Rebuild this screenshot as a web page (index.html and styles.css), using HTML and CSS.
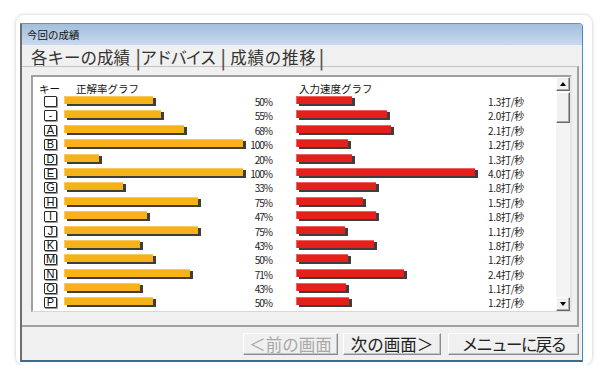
FILE: index.html
```html
<!DOCTYPE html>
<html lang="ja">
<head>
<meta charset="utf-8">
<title>今回の成績</title>
<link rel="stylesheet" href="styles.css">
</head>
<body>
<div class="card">
  <div class="window">
    <div class="titlebar">今回の成績</div>
    <div class="tabs">
      <span class="tab t1">各キーの成績</span><span class="sep s1">|</span><span class="tab t2">アドバイス</span><span class="sep s2">|</span><span class="tab t3">成績の推移</span><span class="sep s3">|</span>
    </div>
    <div class="panel">
      <div class="listbox">
        <div class="content">
          <div class="head"><span class="h-key">キー</span><span class="h-acc">正解率グラフ</span><span class="h-spd">入力速度グラフ</span></div>
          <div class="row"><span class="key"></span><span class="acc-area"><i class="bar acc" style="width:89px"></i></span><span class="pct">50%</span><span class="spd-area"><i class="bar spd" style="width:56px"></i></span><span class="rate">1.3打/秒</span></div>
          <div class="row"><span class="key">-</span><span class="acc-area"><i class="bar acc" style="width:97px"></i></span><span class="pct">55%</span><span class="spd-area"><i class="bar spd" style="width:91px"></i></span><span class="rate">2.0打/秒</span></div>
          <div class="row"><span class="key">A</span><span class="acc-area"><i class="bar acc" style="width:120px"></i></span><span class="pct">68%</span><span class="spd-area"><i class="bar spd" style="width:95px"></i></span><span class="rate">2.1打/秒</span></div>
          <div class="row"><span class="key">B</span><span class="acc-area"><i class="bar acc" style="width:179px"></i></span><span class="pct">100%</span><span class="spd-area"><i class="bar spd" style="width:52px"></i></span><span class="rate">1.2打/秒</span></div>
          <div class="row"><span class="key">D</span><span class="acc-area"><i class="bar acc" style="width:35px"></i></span><span class="pct">20%</span><span class="spd-area"><i class="bar spd" style="width:56px"></i></span><span class="rate">1.3打/秒</span></div>
          <div class="row"><span class="key">E</span><span class="acc-area"><i class="bar acc" style="width:179px"></i></span><span class="pct">100%</span><span class="spd-area"><i class="bar spd" style="width:179px"></i></span><span class="rate">4.0打/秒</span></div>
          <div class="row"><span class="key">G</span><span class="acc-area"><i class="bar acc" style="width:59px"></i></span><span class="pct">33%</span><span class="spd-area"><i class="bar spd" style="width:80px"></i></span><span class="rate">1.8打/秒</span></div>
          <div class="row"><span class="key">H</span><span class="acc-area"><i class="bar acc" style="width:134px"></i></span><span class="pct">75%</span><span class="spd-area"><i class="bar spd" style="width:67px"></i></span><span class="rate">1.5打/秒</span></div>
          <div class="row"><span class="key">I</span><span class="acc-area"><i class="bar acc" style="width:83px"></i></span><span class="pct">47%</span><span class="spd-area"><i class="bar spd" style="width:80px"></i></span><span class="rate">1.8打/秒</span></div>
          <div class="row"><span class="key">J</span><span class="acc-area"><i class="bar acc" style="width:134px"></i></span><span class="pct">75%</span><span class="spd-area"><i class="bar spd" style="width:49px"></i></span><span class="rate">1.1打/秒</span></div>
          <div class="row"><span class="key">K</span><span class="acc-area"><i class="bar acc" style="width:76px"></i></span><span class="pct">43%</span><span class="spd-area"><i class="bar spd" style="width:78px"></i></span><span class="rate">1.8打/秒</span></div>
          <div class="row"><span class="key">M</span><span class="acc-area"><i class="bar acc" style="width:89px"></i></span><span class="pct">50%</span><span class="spd-area"><i class="bar spd" style="width:52px"></i></span><span class="rate">1.2打/秒</span></div>
          <div class="row"><span class="key">N</span><span class="acc-area"><i class="bar acc" style="width:126px"></i></span><span class="pct">71%</span><span class="spd-area"><i class="bar spd" style="width:108px"></i></span><span class="rate">2.4打/秒</span></div>
          <div class="row"><span class="key">O</span><span class="acc-area"><i class="bar acc" style="width:76px"></i></span><span class="pct">43%</span><span class="spd-area"><i class="bar spd" style="width:50px"></i></span><span class="rate">1.1打/秒</span></div>
          <div class="row"><span class="key">P</span><span class="acc-area"><i class="bar acc" style="width:89px"></i></span><span class="pct">50%</span><span class="spd-area"><i class="bar spd" style="width:53px"></i></span><span class="rate">1.2打/秒</span></div>
        </div>
        <div class="scrollbar">
          <div class="sb-btn"><span class="arrow up"></span></div>
          <div class="sb-track"><div class="sb-thumb"></div></div>
          <div class="sb-btn"><span class="arrow down"></span></div>
        </div>
      </div>
    </div>
    <div class="buttons">
      <button class="btn b1 disabled">＜前の画面</button>
      <button class="btn b2">次の画面＞</button>
      <button class="btn b3">メニューに戻る</button>
    </div>
  </div>
</div>
</body>
</html>
```

FILE: styles.css
```css
html, body {
  margin: 0;
  padding: 0;
  background: #ffffff;
}

body {
  font-family: "Noto Sans CJK JP", "Noto Sans", sans-serif;
  color: #1a1a1a;
  padding-top: 15px;
  padding-left: 16px;
}

.card {
  width: 576px;
  height: 350px;
  box-sizing: border-box;
  padding: 8px 9px 3px 4px;
  background: #ffffff;
  border-radius: 8px;
  box-shadow: 0 0 3px rgba(0, 0, 0, 0.18), 0 1px 6px rgba(0, 0, 0, 0.08);
}

.window {
  height: 100%;
  box-sizing: border-box;
  display: flex;
  flex-direction: column;
  background: #f0f0f0;
  border-top: 1px solid #8a8a8a;
  border-left: 2px solid #6e6e6e;
  border-right: 1px solid #3f8ed3;
  border-bottom: 2px solid #3d6d84;
  border-top-right-radius: 4px;
}

.titlebar {
  height: 21px;
  flex: none;
  background: linear-gradient(#a3bedc, #c8daef);
  font-size: 10.5px;
  line-height: 21px;
  padding-left: 5px;
  color: #111;
  border-top-right-radius: 3px;
}

.tabs {
  height: 21px;
  flex: none;
  box-sizing: border-box;
  padding: 3px 0 0 9px;
  display: flex;
  align-items: flex-start;
  font-size: 16.5px;
  line-height: 18px;
  color: #333;
  white-space: nowrap;
}

.tab.t2 { letter-spacing: -1.5px; }
.tab.t3 { letter-spacing: 0.7px; }

.sep {
  font-family: "DejaVu Sans", sans-serif;
  font-size: 19px;
  line-height: 18px;
  color: #555;
  transform: scaleY(1.1);
}
.s1 { margin: 0 -1px 0 5px; }
.s2 { margin: 0 4px 0 5px; }
.s3 { margin: 0 0 0 2px; }

.panel {
  height: 261px;
  flex: none;
  box-sizing: border-box;
  margin-right: 3px;
  padding: 8px 0 0 9px;
  border-top: 1px solid #c4c4c4;
  border-right: 2px solid #a0a0a0;
  border-bottom: 2px solid #a0a0a0;
}

.listbox {
  width: 541px;
  height: 237px;
  box-sizing: border-box;
  background: #ffffff;
  border-top: 2px solid #a0a0a0;
  border-left: 2px solid #a0a0a0;
  border-right: 2px solid #e6e6e6;
  border-bottom: 1px solid #d8d8d8;
  display: flex;
}

.content {
  flex: 1;
  padding: 4px 0 0 6px;
  overflow: hidden;
}

.head {
  height: 15px;
  display: flex;
  font-size: 10.5px;
  line-height: 15px;
  color: #111;
  white-space: nowrap;
}
.h-key { width: 37px; }
.h-acc { width: 223px; }

.row {
  height: 14.4px;
  display: flex;
  align-items: flex-start;
  padding-left: 5px;
}

.key {
  width: 13px;
  height: 11px;
  box-sizing: border-box;
  border: 1px solid #2a2a2a;
  border-radius: 1px;
  box-shadow: 1px 1px 0 #9a9a9a;
  background: #fff;
  font-family: "Liberation Sans", sans-serif;
  font-size: 11px;
  line-height: 9px;
  text-align: center;
  color: #111;
}

.acc-area {
  width: 182px;
  margin-left: 7px;
  height: 11px;
}

.spd-area {
  width: 184px;
  margin-left: 24px;
  height: 11px;
}

.bar {
  display: block;
  height: 8px;
  box-shadow: 3px 2px 0 #3e3e3e, inset 1px 1px 0 rgba(255, 255, 255, 0.3);
}
.bar.acc { background: #f5b319; }
.bar.spd { background: #e4201c; }

.pct {
  width: 26px;
  text-align: right;
  font-size: 10px;
  line-height: 11px;
  letter-spacing: -1px;
  color: #222;
  white-space: nowrap;
}

.rate {
  width: 44px;
  text-align: right;
  font-size: 10px;
  line-height: 11px;
  letter-spacing: -0.3px;
  color: #222;
  white-space: nowrap;
}

.scrollbar {
  width: 14px;
  flex: none;
  display: flex;
  flex-direction: column;
  background: #f4f4f4;
}

.sb-btn {
  height: 14px;
  box-sizing: border-box;
  background: #f0f0f0;
  border: 1px solid;
  border-color: #ffffff #6a6a6a #6a6a6a #ffffff;
  box-shadow: inset -1px -1px 0 #a8a8a8;
  display: flex;
  align-items: center;
  justify-content: center;
}

.arrow {
  width: 0;
  height: 0;
  border-left: 3.5px solid transparent;
  border-right: 3.5px solid transparent;
}
.arrow.up { border-bottom: 4px solid #000; }
.arrow.down { border-top: 4px solid #000; }

.sb-track {
  flex: 1;
  padding-top: 1px;
}

.sb-thumb {
  height: 31px;
  box-sizing: border-box;
  background: #f0f0f0;
  border: 1px solid;
  border-color: #ffffff #6a6a6a #6a6a6a #ffffff;
  box-shadow: inset -1px -1px 0 #a8a8a8;
}

.buttons {
  flex: 1;
  display: flex;
  justify-content: flex-end;
  align-items: flex-start;
  padding: 6px 3px 0 0;
}

.btn {
  height: 22px;
  box-sizing: border-box;
  margin: 0;
  padding: 0;
  background: #f0f0f0;
  border: 1px solid;
  border-color: #ffffff #8a8a8a #8a8a8a #ffffff;
  box-shadow: inset -1px -1px 0 #c4c4c4;
  font-family: "Noto Sans CJK JP", sans-serif;
  font-size: 16.5px;
  line-height: 20px;
  color: #222;
  text-align: center;
  white-space: nowrap;
}
.btn.b1 { width: 95px; }
.btn.b2 { width: 98px; margin-left: 5px; }
.btn.b3 { width: 131px; margin-left: 7px; letter-spacing: -1.7px; }
.btn.disabled { color: #a8a8a8; }
```
